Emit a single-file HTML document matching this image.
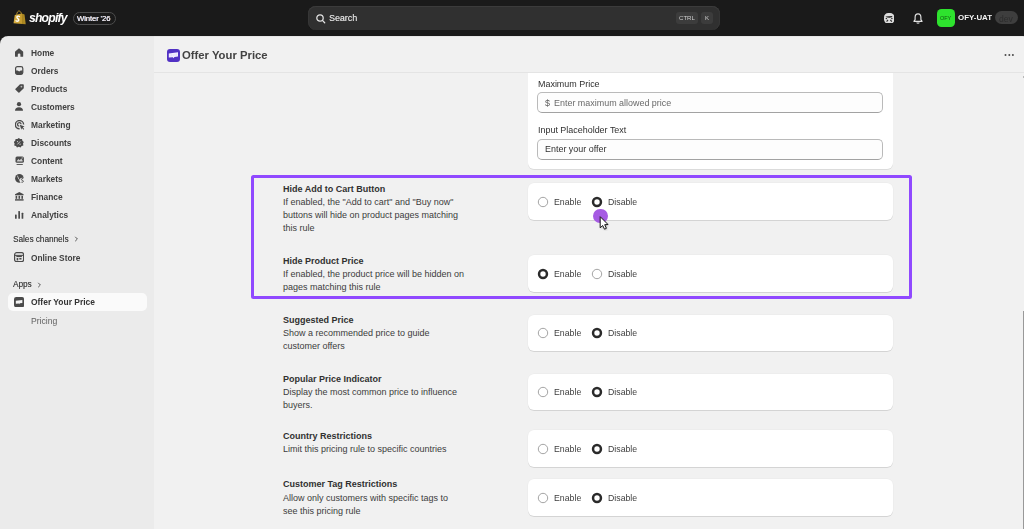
<!DOCTYPE html>
<html><head><meta charset="utf-8"><style>
html,body{margin:0;padding:0;width:1024px;height:529px;overflow:hidden;background:#1a1a1a;position:relative;font-family:"Liberation Sans", sans-serif}
.t{position:absolute;white-space:nowrap;font-family:"Liberation Sans", sans-serif}
.g{will-change:transform}
</style></head><body>
<div style="position:absolute;left:0px;top:0px;width:1024px;height:36px;background:#1a1a1a"></div>
<svg style="position:absolute;left:13px;top:10px" width="13" height="15" viewBox="0 0 13 15"><defs><linearGradient id="bg" x1="0" x2="1"><stop offset="0" stop-color="#d9b043"/><stop offset=".5" stop-color="#c9a033"/><stop offset=".66" stop-color="#c49a2c"/><stop offset=".67" stop-color="#a58320"/><stop offset="1" stop-color="#b38d25"/></linearGradient></defs><path d="M3.6 4.6 C4 2.3 5 0.9 6.1 1 C7.3 1.1 8.1 2.3 8.5 3.8" fill="none" stroke="#b8942c" stroke-width="0.95"/><path d="M1.8 5.1 L8.6 3.5 L11.5 4.4 L12.7 14.2 L0.5 13.3 Z" fill="url(#bg)"/><path d="M6.4 6.6 C5.8 5.9 3.9 5.8 3.9 7.3 C3.9 8.6 5.9 8.6 5.8 10 C5.7 11.3 4.1 11.5 3 10.8" fill="none" stroke="#fff" stroke-width="1.35" stroke-linecap="round"/></svg>
<div class="t g" style="left:28.6px;top:12.07px;font-size:12.2px;line-height:12.2px;font-weight:700;color:#ffffff;font-style:italic;letter-spacing:-0.8px">shopify</div>
<div style="position:absolute;left:73px;top:12px;width:43px;height:13px;border:1px solid #4d4d4d;border-radius:6.5px;box-sizing:border-box"></div>
<div class="t g" style="left:77.4px;top:15.28px;font-size:7.7px;line-height:7.7px;font-weight:400;color:#eef0ff;text-shadow:0.3px 0 0 rgba(255,200,140,.7),-0.3px 0 0 rgba(150,190,255,.7);letter-spacing:-0.1px">Winter '26</div>
<div style="position:absolute;left:308px;top:6px;width:412px;height:24px;background:#303030;border-radius:8px;box-shadow:inset 0 1px 0 #3b3b3b, inset 1px 0 0 #363636, inset -1px 0 0 #363636"></div>
<svg style="position:absolute;left:316px;top:13.5px" width="10" height="10" viewBox="0 0 10 10"><circle cx="4" cy="4" r="3.2" fill="none" stroke="#e3e3e3" stroke-width="1.25"/><path d="M6.4 6.4 L8.7 8.7" stroke="#e3e3e3" stroke-width="1.3" stroke-linecap="round"/></svg>
<div class="t g" style="left:329px;top:14.37px;font-size:8.9px;line-height:8.9px;font-weight:400;color:#e3e3e3;text-shadow:0.3px 0 0 rgba(227,227,227,.6)">Search</div>
<div style="position:absolute;left:676px;top:11.7px;width:22px;height:12.2px;background:#3c3c3c;border-radius:3px"></div>
<div class="t g" style="left:679px;top:15.24px;font-size:6.1px;line-height:6.1px;font-weight:400;color:#cfcfcf;">CTRL</div>
<div style="position:absolute;left:701px;top:11.7px;width:12.2px;height:12.2px;background:#3c3c3c;border-radius:3px"></div>
<div class="t g" style="left:705px;top:15.24px;font-size:6.1px;line-height:6.1px;font-weight:400;color:#cfcfcf;">K</div>
<svg style="position:absolute;left:883.8px;top:12.7px" width="10.4" height="10.8" viewBox="0 0 10.4 10.8"><rect x="0" y="0" width="10.4" height="10.8" rx="4.2" fill="#dcdcdc"/><path d="M1.4 3.6 Q5 3.2 8.6 2.9 Q8.2 4.6 5.6 4.8 Q3.4 4.9 1.4 3.6 Z" fill="#1c1c1c"/><circle cx="2.4" cy="5.6" r="0.75" fill="#2a2a2a"/><circle cx="7.9" cy="5.6" r="0.75" fill="#2a2a2a"/><path d="M2.6 8.6 L4 6.8 M7.8 8.6 L6.4 6.8" stroke="#2a2a2a" stroke-width="1.1"/></svg>
<svg style="position:absolute;left:912.5px;top:12.8px" width="10" height="11" viewBox="0 0 10 11"><path d="M5 0.8 C2.9 0.8 2.1 2.4 2.1 4.3 V6.6 L0.9 8.3 H9.1 L7.9 6.6 V4.3 C7.9 2.4 7.1 0.8 5 0.8 Z" fill="none" stroke="#e3e3e3" stroke-width="1.15" stroke-linejoin="round"/><path d="M3.6 9.6 Q5 10.8 6.4 9.6" stroke="#e3e3e3" stroke-width="1.1" fill="none"/></svg>
<div style="position:absolute;left:936.5px;top:8.7px;width:18.2px;height:18.3px;background:#2ee22e;border-radius:4.5px"></div>
<div class="t g" style="left:939.8px;top:15.84px;font-size:5.5px;line-height:5.5px;font-weight:400;color:#0f5a0f;letter-spacing:-0.1px">OFY</div>
<div class="t g" style="left:957.7px;top:14.11px;font-size:7.9px;line-height:7.9px;font-weight:700;color:#f3f3f3;">OFY-UAT</div>
<div style="position:absolute;left:994.6px;top:11.4px;width:23.4px;height:13px;background:#3e3e3e;border-radius:6.5px"></div>
<div class="t g" style="left:998.6px;top:14.52px;font-size:8.6px;line-height:8.6px;font-weight:400;color:#2c2c2c;">dev</div>
<div style="position:absolute;left:0px;top:36px;width:1024px;height:493px;background:#ebebeb;border-radius:8px 1px 0 0"></div>
<div style="position:absolute;left:154px;top:36px;width:870px;height:493px;background:#f1f1f1;border-radius:0 1px 0 0"></div>
<div style="position:absolute;left:6px;top:36px;width:1018px;height:1px;background:rgba(0,0,0,.045)"></div>
<div style="position:absolute;left:154px;top:72px;width:870px;height:1px;background:#e4e4e4"></div>
<div class="t g" style="left:31px;top:49.49px;font-size:8.4px;line-height:8.4px;font-weight:700;color:#404040;">Home</div>
<svg style="position:absolute;left:15px;top:48.3px" width="10" height="10" viewBox="0 0 10 10"><path d="M4 0.2 L8 3.6 Q8.2 3.8 8.2 4.2 V8.2 Q8.2 8.8 7.6 8.8 H5.4 V6.4 Q5.4 5.4 4.1 5.4 Q2.8 5.4 2.8 6.4 V8.8 H0.6 Q0 8.8 0 8.2 V4.2 Q0 3.8 0.2 3.6 Z" fill="#4a4a4a"/></svg>
<div class="t g" style="left:31px;top:67.49px;font-size:8.4px;line-height:8.4px;font-weight:700;color:#404040;">Orders</div>
<svg style="position:absolute;left:15.2px;top:66.2px" width="10" height="10" viewBox="0 0 10 10"><rect x="0.6" y="0.6" width="7.2" height="7.8" rx="1.8" fill="none" stroke="#4a4a4a" stroke-width="1.2"/><path d="M0.6 4.4 H2.6 L4.2 5.6 L5.8 4.4 H7.8 V6.8 Q7.8 8.4 6.2 8.4 H2.2 Q0.6 8.4 0.6 6.8 Z" fill="#4a4a4a"/></svg>
<div class="t g" style="left:31px;top:85.49px;font-size:8.4px;line-height:8.4px;font-weight:700;color:#404040;">Products</div>
<svg style="position:absolute;left:15px;top:84.3px" width="10" height="10" viewBox="0 0 10 10"><path d="M5 0.3 H8 Q8.8 0.3 8.8 1.1 V4.2 L4.4 8.6 Q3.9 9.1 3.4 8.6 L0.5 5.7 Q0 5.2 0.5 4.7 Z" fill="#4a4a4a"/><circle cx="6.4" cy="2.6" r="0.9" fill="#bdbdbd"/></svg>
<div class="t g" style="left:31px;top:103.49px;font-size:8.4px;line-height:8.4px;font-weight:700;color:#404040;">Customers</div>
<svg style="position:absolute;left:15.3px;top:102px" width="10" height="10" viewBox="0 0 10 10"><circle cx="4" cy="2.2" r="2.1" fill="#4a4a4a"/><path d="M0 8.8 Q0 5.2 4 5.2 Q8 5.2 8 8.8 Z" fill="#4a4a4a"/></svg>
<div class="t g" style="left:31px;top:121.49px;font-size:8.4px;line-height:8.4px;font-weight:700;color:#404040;">Marketing</div>
<svg style="position:absolute;left:15px;top:120px" width="10" height="10" viewBox="0 0 10 10"><path d="M8.6 4.6 A4.1 4.1 0 1 0 4.6 8.8" fill="none" stroke="#4a4a4a" stroke-width="1.4"/><path d="M6.1 4.3 A1.8 1.8 0 1 0 4.3 6.2" fill="none" stroke="#4a4a4a" stroke-width="1.3"/><path d="M4.8 4.8 L9.6 6.4 L7.8 7.3 L9.2 8.9 L8.4 9.7 L7 8.1 L6.3 9.8 Z" fill="#4a4a4a"/></svg>
<div class="t g" style="left:31px;top:139.49px;font-size:8.4px;line-height:8.4px;font-weight:700;color:#404040;">Discounts</div>
<svg style="position:absolute;left:14.4px;top:137.7px" width="10" height="10" viewBox="0 0 10 10"><path d="M4.8 0 L6.2 1.1 L8 1 L8.4 2.8 L9.8 4 L9 5.6 L9.4 7.4 L7.6 7.9 L6.6 9.5 L4.8 8.8 L3 9.5 L2 7.9 L0.2 7.4 L0.6 5.6 L-0.2 4 L1.2 2.8 L1.6 1 L3.4 1.1 Z" fill="#4a4a4a"/><path d="M3.4 6.4 L6.2 3.4" stroke="#d8d8d8" stroke-width="0.9"/><circle cx="3.5" cy="3.6" r="0.6" fill="#d8d8d8"/><circle cx="6.1" cy="6.2" r="0.6" fill="#d8d8d8"/></svg>
<div class="t g" style="left:31px;top:157.49px;font-size:8.4px;line-height:8.4px;font-weight:700;color:#404040;">Content</div>
<svg style="position:absolute;left:15px;top:156px" width="10" height="10" viewBox="0 0 10 10"><rect x="0.5" y="0.5" width="8.4" height="6.2" rx="1.5" fill="#4a4a4a"/><path d="M1.8 5 L3.4 3 L4.8 4.2 L6.2 2.6 L7.6 4.5 V5.6 H1.8 Z" fill="#cfcfcf"/><circle cx="7.2" cy="1.9" r="0.6" fill="#cfcfcf"/><rect x="1.6" y="8.1" width="6.2" height="0.9" fill="#4a4a4a"/></svg>
<div class="t g" style="left:31px;top:175.49px;font-size:8.4px;line-height:8.4px;font-weight:700;color:#404040;">Markets</div>
<svg style="position:absolute;left:15px;top:174.3px" width="10" height="10" viewBox="0 0 10 10"><circle cx="4.4" cy="4.4" r="4.3" fill="#4a4a4a"/><path d="M2 1.8 Q3.6 2.6 3.2 4 Q4.4 5.4 5.6 7.6" fill="none" stroke="#cfcfcf" stroke-width="0.9"/><circle cx="7.2" cy="6.4" r="2.6" fill="#ebebeb"/><path d="M8.1 4.6 Q6.4 4.3 6.4 5.4 Q6.4 6.3 7.4 6.4 Q8.4 6.5 8.4 7.4 Q8.4 8.5 6.4 8.2" fill="none" stroke="#4a4a4a" stroke-width="0.9"/></svg>
<div class="t g" style="left:31px;top:193.49px;font-size:8.4px;line-height:8.4px;font-weight:700;color:#404040;">Finance</div>
<svg style="position:absolute;left:15px;top:192px" width="10" height="10" viewBox="0 0 10 10"><path d="M4.3 0 L8.6 2.2 V3.2 H0 V2.2 Z" fill="#4a4a4a"/><rect x="0.6" y="3.8" width="1.6" height="3" fill="#4a4a4a"/><rect x="3.5" y="3.8" width="1.6" height="3" fill="#4a4a4a"/><rect x="6.4" y="3.8" width="1.6" height="3" fill="#4a4a4a"/><rect x="0" y="7.2" width="8.6" height="1.4" fill="#4a4a4a"/></svg>
<div class="t g" style="left:31px;top:211.49px;font-size:8.4px;line-height:8.4px;font-weight:700;color:#404040;">Analytics</div>
<svg style="position:absolute;left:15px;top:210.8px" width="10" height="10" viewBox="0 0 10 10"><rect x="0" y="3.6" width="1.7" height="4.2" rx="0.5" fill="#4a4a4a"/><rect x="3.3" y="0" width="1.7" height="7.8" rx="0.5" fill="#4a4a4a"/><rect x="6.6" y="1.8" width="1.7" height="6" rx="0.5" fill="#4a4a4a"/></svg>
<div class="t g" style="left:13px;top:235.66px;font-size:8.2px;line-height:8.2px;font-weight:400;color:#363636;text-shadow:0.25px 0 0 rgba(54,54,54,.5)">Sales channels</div>
<svg style="position:absolute;left:73.5px;top:236px" width="5" height="6" viewBox="0 0 5 6"><path d="M1.2 0.8 L3.4 3 L1.2 5.2" fill="none" stroke="#4a4a4a" stroke-width="0.9"/></svg>
<svg style="position:absolute;left:14.2px;top:251.6px" width="10.2" height="10.4" viewBox="0 0 10 10"><rect x="0.6" y="0.6" width="8.8" height="8.8" rx="2" fill="none" stroke="#4a4a4a" stroke-width="1.2"/><path d="M0.8 3.2 H9.2" stroke="#4a4a4a" stroke-width="1"/><rect x="2.3" y="3.6" width="5.4" height="1.3" fill="#4a4a4a"/><rect x="2.6" y="5.8" width="1.6" height="2.4" fill="#4a4a4a"/><rect x="5.2" y="5.8" width="2.2" height="1.5" fill="#4a4a4a"/></svg>
<div class="t g" style="left:31px;top:253.97px;font-size:8.3px;line-height:8.3px;font-weight:700;color:#404040;">Online Store</div>
<div class="t g" style="left:13px;top:281.16px;font-size:8.2px;line-height:8.2px;font-weight:400;color:#363636;text-shadow:0.25px 0 0 rgba(54,54,54,.5)">Apps</div>
<svg style="position:absolute;left:36.5px;top:281.5px" width="5" height="6" viewBox="0 0 5 6"><path d="M1.2 0.8 L3.4 3 L1.2 5.2" fill="none" stroke="#4a4a4a" stroke-width="0.9"/></svg>
<div style="position:absolute;left:8px;top:293.2px;width:138.5px;height:17.7px;background:#fafafa;border-radius:5px"></div>
<svg style="position:absolute;left:14.2px;top:297px" width="10.2" height="10.4" viewBox="0 0 10 10"><rect x="0" y="0" width="10" height="10" rx="2.2" fill="#4a4a4a"/><path d="M1.8 3.5 L8.2 2.8 V5.8 L5.6 6.1 L5.2 7 L4.6 6.2 L1.8 6.5 Z" fill="#f5f5f5"/></svg>
<div class="t g" style="left:31px;top:298.45px;font-size:8.45px;line-height:8.45px;font-weight:700;color:#333333;">Offer Your Price</div>
<div class="t g" style="left:31px;top:316.72px;font-size:8.6px;line-height:8.6px;font-weight:400;color:#616161;">Pricing</div>
<svg style="position:absolute;left:167px;top:48.9px" width="13" height="13" viewBox="0 0 13 13"><rect x="0" y="0" width="13" height="13" rx="3" fill="#5131c4"/><path d="M1.8 4.6 L11 3.3 V7.6 L7.4 8 L6.5 9.2 L5.9 8.2 L1.8 8.6 Z" fill="#f4f0ff"/><path d="M3 5.4 V7.6 M4.5 5.2 V7.4 M6.2 5 V7.2 M8 4.8 V7 M9.6 4.5 V6.8" stroke="#d8ccff" stroke-width="0.5"/></svg>
<div class="t g" style="left:181.8px;top:50.03px;font-size:11.3px;line-height:11.3px;font-weight:700;color:#434343;">Offer Your Price</div>
<svg style="position:absolute;left:1003px;top:53px" width="12" height="4" viewBox="0 0 12 4"><circle cx="2.5" cy="2.1" r="1" fill="#4a4a4a"/><circle cx="6.3" cy="2.1" r="1" fill="#4a4a4a"/><circle cx="9.9" cy="2.1" r="1" fill="#4a4a4a"/></svg>
<div style="position:absolute;left:1022.6px;top:311.2px;width:1.4px;height:218px;background:#999999"></div>
<div style="position:absolute;left:1022.5px;top:75.5px;width:1.5px;height:2.5px;background:#b8b8b8"></div>
<div style="position:absolute;left:528px;top:73px;width:365px;height:96px;background:#fff;border-radius:0 0 6px 6px;box-shadow:0 1px 0 rgba(0,0,0,.09)"></div>
<div class="t g" style="left:537.7px;top:79.82px;font-size:8.95px;line-height:8.95px;font-weight:400;color:#303030;">Maximum Price</div>
<div style="position:absolute;left:537px;top:92px;width:346px;height:21px;background:#fdfdfd;border:1px solid #bababa;border-bottom-color:#a2a2a2;border-radius:5px;box-sizing:border-box"></div>
<div class="t g" style="left:545.4px;top:99.02px;font-size:8.95px;line-height:8.95px;font-weight:400;color:#5c5c5c;">$</div>
<div class="t g" style="left:554.3px;top:99.02px;font-size:8.95px;line-height:8.95px;font-weight:400;color:#6a6a6a;">Enter maximum allowed price</div>
<div class="t g" style="left:537.7px;top:126.02px;font-size:8.95px;line-height:8.95px;font-weight:400;color:#303030;">Input Placeholder Text</div>
<div style="position:absolute;left:537px;top:139px;width:346px;height:20.6px;background:#fdfdfd;border:1px solid #bababa;border-bottom-color:#a2a2a2;border-radius:5px;box-sizing:border-box"></div>
<div class="t g" style="left:545.4px;top:145.32px;font-size:8.95px;line-height:8.95px;font-weight:400;color:#303030;">Enter your offer</div>
<div style="position:absolute;left:251px;top:174.6px;width:660.5px;height:124.2px;border:3.5px solid #9049ff;border-radius:2.5px;box-sizing:border-box"></div>
<div class="t" style="left:283px;top:185.08px;font-size:9px;line-height:9px;font-weight:700;color:#303030;">Hide Add to Cart Button</div>
<div class="t" style="left:283px;top:198.38px;font-size:9px;line-height:9px;font-weight:400;color:#3c3c3c;">If enabled, the "Add to cart" and "Buy now"</div>
<div class="t" style="left:283px;top:211.13px;font-size:9px;line-height:9px;font-weight:400;color:#3c3c3c;">buttons will hide on product pages matching</div>
<div class="t" style="left:283px;top:223.88px;font-size:9px;line-height:9px;font-weight:400;color:#3c3c3c;">this rule</div>
<div style="position:absolute;left:528px;top:183.4px;width:365px;height:36.9px;background:#fff;border-radius:6px;box-shadow:0 1px 0 rgba(0,0,0,.1), 0 0 0 0.5px rgba(0,0,0,.03)"></div>
<svg style="position:absolute;left:537.1px;top:196.0px" width="12" height="12" viewBox="0 0 12 12"><circle cx="6" cy="6" r="4.7" fill="#fff" stroke="#9a9a9a" stroke-width="0.9"/></svg>
<div class="t g" style="left:554.4px;top:198.09px;font-size:8.75px;line-height:8.75px;font-weight:400;color:#3e3e3e;">Enable</div>
<svg style="position:absolute;left:591.1px;top:196.0px" width="12" height="12" viewBox="0 0 12 12"><circle cx="6" cy="6" r="3.95" fill="#fff" stroke="#2a2a2a" stroke-width="2.5"/></svg>
<div class="t g" style="left:608.3px;top:198.09px;font-size:8.75px;line-height:8.75px;font-weight:400;color:#3e3e3e;">Disable</div>
<div class="t" style="left:283px;top:257.18px;font-size:9px;line-height:9px;font-weight:700;color:#303030;">Hide Product Price</div>
<div class="t" style="left:283px;top:270.48px;font-size:9px;line-height:9px;font-weight:400;color:#3c3c3c;">If enabled, the product price will be hidden on</div>
<div class="t" style="left:283px;top:283.23px;font-size:9px;line-height:9px;font-weight:400;color:#3c3c3c;">pages matching this rule</div>
<div style="position:absolute;left:528px;top:255.1px;width:365px;height:36.9px;background:#fff;border-radius:6px;box-shadow:0 1px 0 rgba(0,0,0,.1), 0 0 0 0.5px rgba(0,0,0,.03)"></div>
<svg style="position:absolute;left:537.1px;top:267.7px" width="12" height="12" viewBox="0 0 12 12"><circle cx="6" cy="6" r="3.95" fill="#fff" stroke="#2a2a2a" stroke-width="2.5"/></svg>
<div class="t g" style="left:554.4px;top:269.79px;font-size:8.75px;line-height:8.75px;font-weight:400;color:#3e3e3e;">Enable</div>
<svg style="position:absolute;left:591.1px;top:267.7px" width="12" height="12" viewBox="0 0 12 12"><circle cx="6" cy="6" r="4.7" fill="#fff" stroke="#9a9a9a" stroke-width="0.9"/></svg>
<div class="t g" style="left:608.3px;top:269.79px;font-size:8.75px;line-height:8.75px;font-weight:400;color:#3e3e3e;">Disable</div>
<div class="t" style="left:283px;top:315.98px;font-size:9px;line-height:9px;font-weight:700;color:#303030;">Suggested Price</div>
<div class="t" style="left:283px;top:329.28px;font-size:9px;line-height:9px;font-weight:400;color:#3c3c3c;">Show a recommended price to guide</div>
<div class="t" style="left:283px;top:342.03px;font-size:9px;line-height:9px;font-weight:400;color:#3c3c3c;">customer offers</div>
<div style="position:absolute;left:528px;top:314.6px;width:365px;height:36.9px;background:#fff;border-radius:6px;box-shadow:0 1px 0 rgba(0,0,0,.1), 0 0 0 0.5px rgba(0,0,0,.03)"></div>
<svg style="position:absolute;left:537.1px;top:327.20000000000005px" width="12" height="12" viewBox="0 0 12 12"><circle cx="6" cy="6" r="4.7" fill="#fff" stroke="#9a9a9a" stroke-width="0.9"/></svg>
<div class="t g" style="left:554.4px;top:329.29px;font-size:8.75px;line-height:8.75px;font-weight:400;color:#3e3e3e;">Enable</div>
<svg style="position:absolute;left:591.1px;top:327.20000000000005px" width="12" height="12" viewBox="0 0 12 12"><circle cx="6" cy="6" r="3.95" fill="#fff" stroke="#2a2a2a" stroke-width="2.5"/></svg>
<div class="t g" style="left:608.3px;top:329.29px;font-size:8.75px;line-height:8.75px;font-weight:400;color:#3e3e3e;">Disable</div>
<div class="t" style="left:283px;top:374.98px;font-size:9px;line-height:9px;font-weight:700;color:#303030;">Popular Price Indicator</div>
<div class="t" style="left:283px;top:388.28px;font-size:9px;line-height:9px;font-weight:400;color:#3c3c3c;">Display the most common price to influence</div>
<div class="t" style="left:283px;top:401.03px;font-size:9px;line-height:9px;font-weight:400;color:#3c3c3c;">buyers.</div>
<div style="position:absolute;left:528px;top:373.5px;width:365px;height:36.9px;background:#fff;border-radius:6px;box-shadow:0 1px 0 rgba(0,0,0,.1), 0 0 0 0.5px rgba(0,0,0,.03)"></div>
<svg style="position:absolute;left:537.1px;top:386.1px" width="12" height="12" viewBox="0 0 12 12"><circle cx="6" cy="6" r="4.7" fill="#fff" stroke="#9a9a9a" stroke-width="0.9"/></svg>
<div class="t g" style="left:554.4px;top:388.19px;font-size:8.75px;line-height:8.75px;font-weight:400;color:#3e3e3e;">Enable</div>
<svg style="position:absolute;left:591.1px;top:386.1px" width="12" height="12" viewBox="0 0 12 12"><circle cx="6" cy="6" r="3.95" fill="#fff" stroke="#2a2a2a" stroke-width="2.5"/></svg>
<div class="t g" style="left:608.3px;top:388.19px;font-size:8.75px;line-height:8.75px;font-weight:400;color:#3e3e3e;">Disable</div>
<div class="t" style="left:283px;top:431.58px;font-size:9px;line-height:9px;font-weight:700;color:#303030;">Country Restrictions</div>
<div class="t" style="left:283px;top:444.88px;font-size:9px;line-height:9px;font-weight:400;color:#3c3c3c;">Limit this pricing rule to specific countries</div>
<div style="position:absolute;left:528px;top:430.1px;width:365px;height:36.9px;background:#fff;border-radius:6px;box-shadow:0 1px 0 rgba(0,0,0,.1), 0 0 0 0.5px rgba(0,0,0,.03)"></div>
<svg style="position:absolute;left:537.1px;top:442.70000000000005px" width="12" height="12" viewBox="0 0 12 12"><circle cx="6" cy="6" r="4.7" fill="#fff" stroke="#9a9a9a" stroke-width="0.9"/></svg>
<div class="t g" style="left:554.4px;top:444.79px;font-size:8.75px;line-height:8.75px;font-weight:400;color:#3e3e3e;">Enable</div>
<svg style="position:absolute;left:591.1px;top:442.70000000000005px" width="12" height="12" viewBox="0 0 12 12"><circle cx="6" cy="6" r="3.95" fill="#fff" stroke="#2a2a2a" stroke-width="2.5"/></svg>
<div class="t g" style="left:608.3px;top:444.79px;font-size:8.75px;line-height:8.75px;font-weight:400;color:#3e3e3e;">Disable</div>
<div class="t" style="left:283px;top:480.48px;font-size:9px;line-height:9px;font-weight:700;color:#303030;">Customer Tag Restrictions</div>
<div class="t" style="left:283px;top:493.78px;font-size:9px;line-height:9px;font-weight:400;color:#3c3c3c;">Allow only customers with specific tags to</div>
<div class="t" style="left:283px;top:506.53px;font-size:9px;line-height:9px;font-weight:400;color:#3c3c3c;">see this pricing rule</div>
<div style="position:absolute;left:528px;top:479px;width:365px;height:36.9px;background:#fff;border-radius:6px;box-shadow:0 1px 0 rgba(0,0,0,.1), 0 0 0 0.5px rgba(0,0,0,.03)"></div>
<svg style="position:absolute;left:537.1px;top:491.6px" width="12" height="12" viewBox="0 0 12 12"><circle cx="6" cy="6" r="4.7" fill="#fff" stroke="#9a9a9a" stroke-width="0.9"/></svg>
<div class="t g" style="left:554.4px;top:493.69px;font-size:8.75px;line-height:8.75px;font-weight:400;color:#3e3e3e;">Enable</div>
<svg style="position:absolute;left:591.1px;top:491.6px" width="12" height="12" viewBox="0 0 12 12"><circle cx="6" cy="6" r="3.95" fill="#fff" stroke="#2a2a2a" stroke-width="2.5"/></svg>
<div class="t g" style="left:608.3px;top:493.69px;font-size:8.75px;line-height:8.75px;font-weight:400;color:#3e3e3e;">Disable</div>
<div style="position:absolute;left:593.2px;top:208.8px;width:14.4px;height:14.3px;background:#a65be3;border-radius:50%"></div>
<svg style="position:absolute;left:598px;top:214.5px" width="13" height="16" viewBox="0 0 13 16"><defs><filter id="sh" x="-50%" y="-50%" width="200%" height="200%"><feGaussianBlur stdDeviation="0.8"/></filter></defs><path d="M2.8 2.5 L2.8 13.6 L5.3 11.3 L7.1 15 L9 14.1 L7.3 10.5 L10.6 10.3 Z" fill="rgba(0,0,0,.35)" filter="url(#sh)"/><path d="M2.2 1.7 L2.2 12.8 L4.7 10.5 L6.5 14.2 L8.4 13.3 L6.7 9.7 L10 9.5 Z" fill="#fff" stroke="#111" stroke-width="0.95" stroke-linejoin="round"/></svg>
</body></html>
